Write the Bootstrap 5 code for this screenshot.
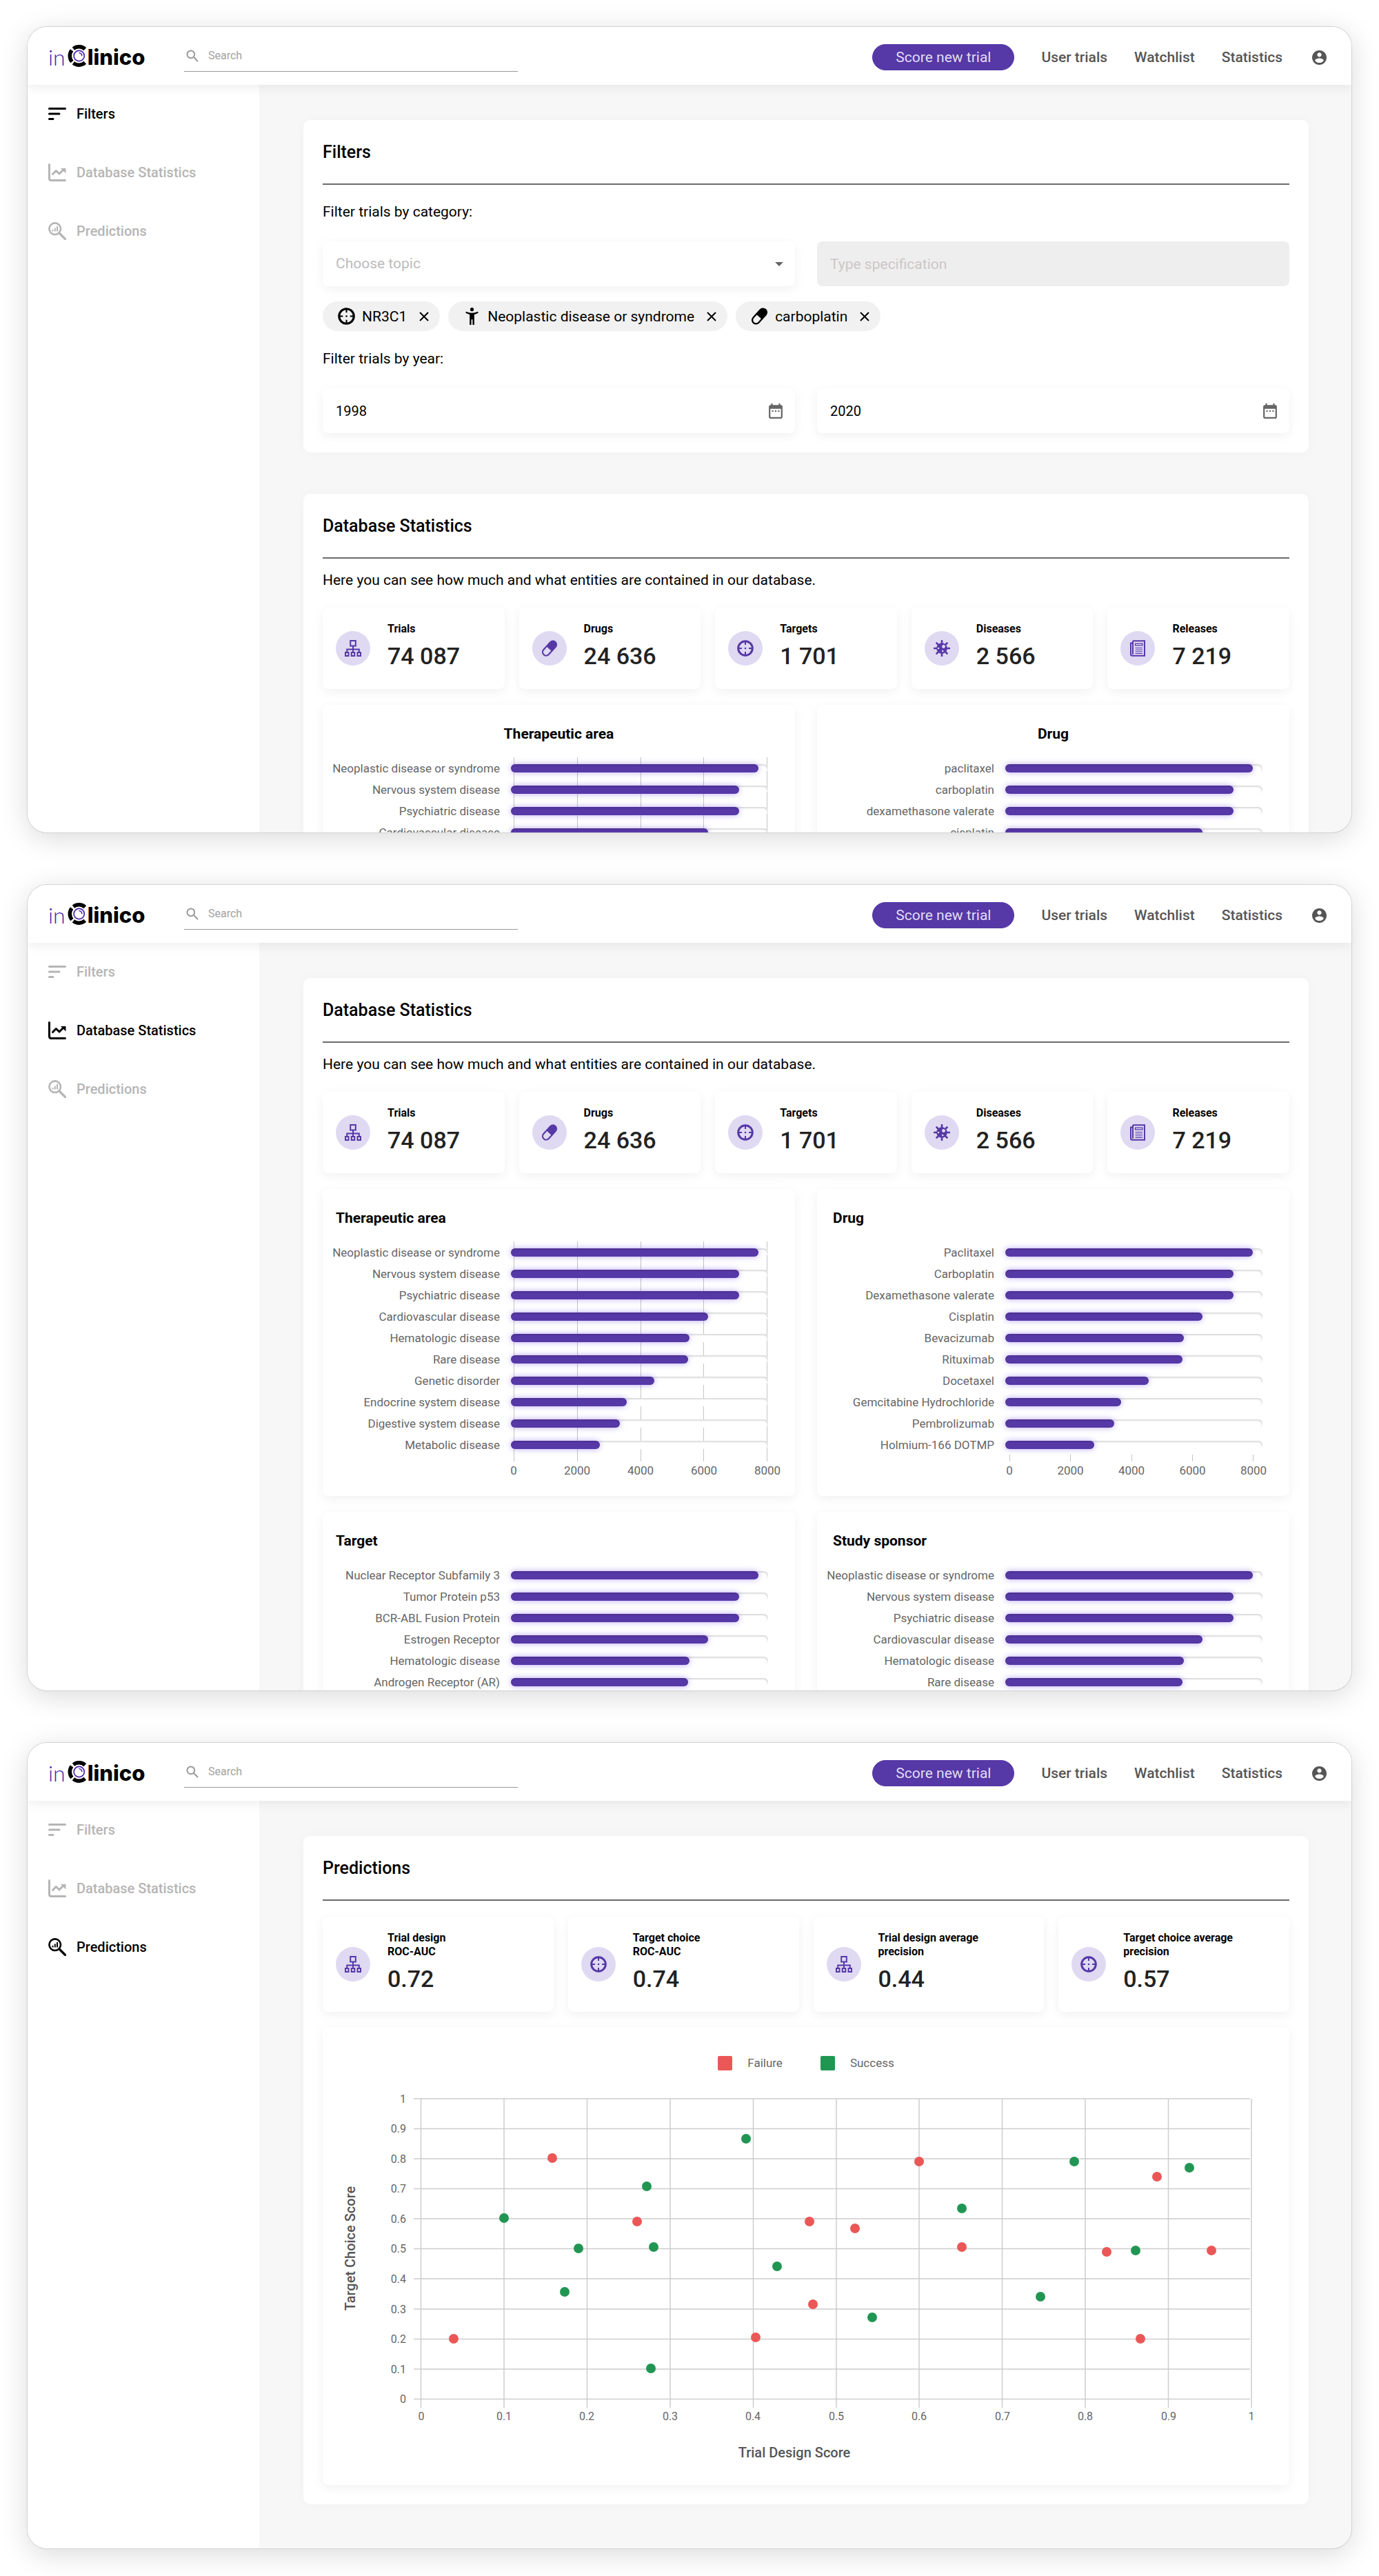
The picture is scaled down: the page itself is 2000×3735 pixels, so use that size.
<!DOCTYPE html>
<html lang="en">
<head>
<meta charset="utf-8">
<meta name="viewport" content="width=device-width, initial-scale=1">
<title>inClinico</title>
<link href="https://cdn.jsdelivr.net/npm/bootstrap@5.3.0/dist/css/bootstrap.min.css" rel="stylesheet">
<style>
  :root { --violet: #5638a6; --violet-soft: #dfd9f2; --ink: #000; --muted: #b5b5b5; --axis: #666; }
  body { font-family: Roboto, sans-serif; font-size: 21px; line-height: 24px; color: var(--ink); background: #fff; }
  a { text-decoration: none; color: inherit; }
  svg { display: block; flex: none; }

  /* application windows */
  .screens { padding: 39px 40px; gap: 76px; }
  .screen { aspect-ratio: 1920 / 1168; border-radius: 28px; background: #f7f7f7; overflow: hidden; box-shadow: 0 0 0 1px #d2d2d2, 0 8px 40px rgba(0,0,0,.15); }

  /* header */
  .topbar { height: 84px; padding: 0 36px 0 30px; background: #fff; box-shadow: 0 4px 16px rgba(0,0,0,.07); position: relative; z-index: 1; }
  .logo-link { width: 141px; margin-right: 56px; line-height: 34px; white-space: nowrap; }
  .logo-thin { font-family: Lato, sans-serif; font-weight: 300; font-size: 32px; color: #4a22b0; padding-top: 4px; margin-right: 3px; }
  .logo-bold { font-family: Inter, sans-serif; font-weight: 800; font-size: 31px; color: #000; padding-top: 4px; margin-left: -4px; }
  .searchbox { width: 484px; height: 46px; border-bottom: 1px solid #999; color: #999; padding-left: 3px; gap: 14px; }
  .searchbox input { border: 0; outline: 0; background: none; font-size: 16px; color: #999; min-width: 0; padding: 0; }
  .searchbox input::placeholder { color: #a3a3a3; opacity: 1; }
  .topnav { gap: 39px; color: #555; font-weight: 500; padding-top: 4px; }
  .btn-score { --bs-btn-bg: var(--violet); --bs-btn-color: #e3dcf5; --bs-btn-border-color: var(--violet); --bs-btn-hover-bg: #452d88; --bs-btn-hover-color: #fff; width: 206px; height: 38px; padding: 0; font-size: 21px; line-height: 24px; }

  /* sidebar */
  .side { width: 336px; flex: none; background: #fff; padding: 29px 30px; gap: 59px; font-size: 20px; }
  .side a { gap: 15px; color: var(--muted); font-weight: 500; }
  .side a.active { color: #000; }

  /* panels */
  .content { padding: 51px 62px 0 64px; gap: 60px; min-width: 0; }
  .panel { background: #fff; border-radius: 10px; padding: 32px 28px 28px; box-shadow: 0 0 16px rgba(0,0,0,.03); }
  .panel h2 { font-size: 25px; line-height: 30px; font-weight: 500; padding-bottom: 30px; margin: 0; border-bottom: 2px solid #6b6b6b; }
  .lift { background-color: #fff; border-radius: 8px; box-shadow: 0 4px 16px rgba(0,0,0,.06); }
  .two-up { display: grid; grid-template-columns: 1fr 1fr; column-gap: 32px; row-gap: 23px; }
  .intro { margin: 19px 0 28px; }

  /* filter form */
  .field { height: 65px; padding: 0 16px 0 19px; font-size: 21px; border: 0; border-radius: 8px; width: 100%; }
  .field-label { display: block; margin-bottom: 31px; }
  .panel h2 + .field-label { margin-top: 27px; }
  .topic { color: #bbb; background-position: right 17px center; background-size: 12px 6px; background-image: url("data:image/svg+xml,%3csvg xmlns='http://www.w3.org/2000/svg' viewBox='0 0 12 6'%3e%3cpath fill='%23666' d='M0 0h12L6 6z'/%3e%3c/svg%3e"); }
  .spec:disabled { background: #eee; }
  .spec::placeholder { color: #ccc7c7; opacity: 1; }
  .year { border: 0; outline: 0; background: none; min-width: 0; padding: 0; font-size: 20px; color: #000; }
  .chips { gap: 12px; margin: 22px 0 28px; }
  .chip { height: 43px; border-radius: 22px; background: #f1f1f1; padding: 0 16px 0 22px; }
  .chip button { border: 0; background: none; padding: 0; margin-left: 18px; color: inherit; }
  .chip-icon { margin-right: 10px; }

  /* figures */
  .stats { display: grid; gap: 21px; }
  .stats-5 { grid-template-columns: repeat(5, 1fr); }
  .stats-4 { grid-template-columns: repeat(4, 1fr); margin-top: 23px; }
  .stat { padding: 21px 19px; }
  .disc { width: 50px; height: 50px; background: var(--violet-soft); color: var(--violet); border-radius: 50%; flex: none; margin-right: 25px; --hole: var(--violet-soft); }
  .stat-name { font-size: 16px; line-height: 20px; font-weight: 700; }
  .stat-value { font-size: 34px; line-height: 40px; font-weight: 500; color: #222; padding: 9px 0 7px; }

  /* bar charts */
  .charts { margin-top: 23px; }
  .chart { padding: 30px 0 25px; }
  .chart h3 { font-size: 21px; line-height: 24px; font-weight: 700; margin: 0 0 22px; padding: 0 19px; }
  .chart.inset h3 { padding: 0 23px; }
  .plot { position: relative; padding: 0 39px 9px 0; }
  .bar-row { height: 31px; gap: 16px; font-size: 17px; color: var(--axis); position: relative; }
  .bar-row > span { width: 257px; text-align: right; white-space: nowrap; flex: none; }
  .track { height: 12px; border-radius: 6px; background: #fff; box-shadow: inset -1px 2px 2px rgba(0,0,0,.14); }
  .fill { height: 12px; border-radius: 6px; background: var(--violet); box-shadow: 0 0 8px rgba(98,60,234,.45), inset 0 2px 2px rgba(0,0,0,.12); }
  .rules { position: absolute; top: 0; bottom: 0; left: 277px; right: 40px; }
  .rules i { width: 1px; background: #c4c4c4; }
  .rules.ticks { top: auto; height: 10px; left: 279px; right: 52px; }
  .scale { margin: 1px 40px 0 277px; font-size: 17px; color: var(--axis); }
  .scale.ticks-scale { margin: 1px 52px 0 279px; }
  .scale span { width: 0; display: flex; justify-content: center; }

  /* scatter chart */
  .scatter { padding: 40px 0 0; margin-top: 22px; }
  .legend { gap: 55px; font-size: 17px; color: var(--axis); }
  .legend span { display: flex; align-items: center; gap: 22px; }
  .swatch { width: 21px; height: 21px; border-radius: 2px; }
  .fail { background: #eb5757; fill: #eb5757; }
  .good { background: #219653; fill: #219653; }
  .axis-title { font-size: 20px; font-weight: 500; fill: #555; text-anchor: middle; }
  .scatter-num { font-size: 16px; fill: var(--axis); }
</style>
</head>
<body>

<svg width="0" height="0" class="position-absolute" aria-hidden="true">
  <symbol id="mark" viewBox="0 0 33 34">
    <path d="M8.4 6.600A13.200 13.200 0 0 1 25.300 7.200M6.400 25.500A13.200 13.200 0 0 1 6.100 8.900M25.300 26.800A13.200 13.200 0 0 1 8.400 27.400" fill="none" stroke="#000" stroke-width="5.500"/>
    <circle cx="16.700" cy="17" r="7.600" fill="none" stroke="#4a22b0" stroke-width="1.700"/>
    <path d="M17 12.700a4.300 4.300 0 0 1 3.800 4" fill="none" stroke="#4a22b0" stroke-width="1.500" stroke-linecap="round"/>
  </symbol>
  <symbol id="search" viewBox="0 0 18 18"><g fill="none" stroke="currentColor" stroke-width="2"><circle cx="6.800" cy="6.800" r="5.400"/><path d="M10.800 10.800 17 17"/></g></symbol>
  <symbol id="sort" viewBox="0 0 26 26"><path d="M1.500 5.500h23M1.500 13h14.500M1.500 20.500h5.500" fill="none" stroke="currentColor" stroke-width="3" stroke-linecap="round"/></symbol>
  <symbol id="trend" viewBox="0 0 26 26"><g fill="none" stroke="currentColor" stroke-width="3" stroke-linecap="round"><path d="M1.500 1.500v20q0 3 3 3h20"/><path d="M6.500 15.500 11.300 10.500l4.700 4.500 6-6" stroke-linejoin="round"/></g><path d="M18 7h7.500v7.500z" fill="currentColor"/></symbol>
  <symbol id="insight" viewBox="0 0 26 26"><g fill="none" stroke="currentColor"><circle cx="9.700" cy="9.700" r="8.300" stroke-width="2.600"/><path d="m16.500 16.500 8 8" stroke-width="3.200" stroke-linecap="round"/><path d="M6.500 13.500v-2.500M9.800 13.500v-5M13 13.500v-7.500" stroke-width="2"/></g></symbol>
  <symbol id="account" viewBox="2 2 20 20"><path fill="currentColor" d="M12 2C6.480 2 2 6.480 2 12s4.480 10 10 10 10-4.480 10-10S17.520 2 12 2zm0 3c1.660 0 3 1.340 3 3s-1.340 3-3 3-3-1.340-3-3 1.340-3 3-3zm0 14.200c-2.500 0-4.710-1.280-6-3.220.03-1.990 4-3.080 6-3.080 1.990 0 5.970 1.090 6 3.080-1.290 1.940-3.500 3.220-6 3.220z"/></symbol>
  <symbol id="target" viewBox="0 0 24 24"><circle cx="12" cy="12" r="10.300" fill="none" stroke="currentColor" stroke-width="3"/><path d="M12 2v5M12 17v5M2 12h5M17 12h5" stroke="currentColor" stroke-width="2"/><circle cx="12" cy="12" r="1.300" fill="currentColor"/></symbol>
  <symbol id="figure" viewBox="0 0 24 24"><circle cx="12" cy="2.600" r="2.500" fill="currentColor"/><path d="M3.800 5.500q3.700 2 8.200 2t8.200-2l.6 2q-2.600 1.400-5.600 2V24h-2.300v-7.500h-1.800V24H8.800V9.500q-3-.6-5.600-2z" fill="currentColor"/></symbol>
  <symbol id="pill" viewBox="0 0 24 24"><g transform="rotate(42 12 12)"><rect x="5.800" y="-1.500" width="12.400" height="27" rx="6.200" fill="currentColor"/><path d="M8 13h8v6.300a4 4 0 0 1-8 0z" fill="var(--hole,#f1f1f1)"/></g></symbol>
  <symbol id="tree" viewBox="0 0 24 24"><g fill="none" stroke="currentColor" stroke-width="2"><path d="M8.200 1h7.600v7.500H8.200zM1 18h4.500v5H1zM9.750 18h4.500v5h-4.500zM18.500 18H23v5h-4.500zM12 8.500V18M3.250 18v-4.500h17.500V18"/></g></symbol>
  <symbol id="virus" viewBox="0 0 24 24"><path d="M12 1v22M1 12h22M4.500 4.500l15 15M19.500 4.500l-15 15" stroke="currentColor" stroke-width="2.600" stroke-linecap="round"/><circle cx="12" cy="12" r="7.800" fill="currentColor"/><circle cx="14.500" cy="9.500" r="2.400" fill="var(--hole)"/><circle cx="7" cy="12" r="1.300" fill="var(--hole)"/><circle cx="13.200" cy="16" r="1.300" fill="var(--hole)"/></symbol>
  <symbol id="news" viewBox="0 0 24 24"><g fill="none" stroke="currentColor"><path d="M5 1.200h17v21.600H4a2 2 0 0 1-2-2V4.500h3M5 1.200v19.500" stroke-width="2"/><path d="M8.500 5.200H19v2.600H8.500z" stroke-width="1.200"/><path d="M8.500 11.500H19M8.500 14.200H19M8.500 16.900H19M8.500 19.500H19" stroke-width="1"/></g></symbol>
  <symbol id="calendar" viewBox="2 2 20 20"><path fill="currentColor" d="M9 11H7v2h2v-2zm4 0h-2v2h2v-2zm4 0h-2v2h2v-2zm2-7h-1V2h-2v2H8V2H6v2H5c-1.110 0-1.990.9-1.990 2L3 20c0 1.100.890 2 2 2h14c1.100 0 2-.9 2-2V6c0-1.100-.9-2-2-2zm0 16H5V9h14v11z"/></symbol>
  <symbol id="close" viewBox="0 0 14 14"><path d="m1 1 12 12M13 1 1 13" stroke="currentColor" stroke-width="2"/></symbol>
</svg>

<main class="screens d-flex flex-column">

  <section class="screen d-flex flex-column" aria-label="Filters screen">
    <header class="topbar d-flex align-items-center flex-shrink-0">
      <a class="logo-link d-flex align-items-center" href="#"><span class="logo-thin">in</span><svg width="33" height="34" role="img" aria-label="C"><use href="#mark"/></svg><span class="logo-bold">linico</span></a>
      <label class="searchbox d-flex align-items-center"><svg width="18" height="18"><use href="#search"/></svg><input class="flex-grow-1" type="search" placeholder="Search" aria-label="Search"></label>
      <nav class="topnav d-flex align-items-center ms-auto">
        <button class="btn btn-score rounded-pill" type="button">Score new trial</button>
        <a href="#">User trials</a><a href="#">Watchlist</a><a href="#">Statistics</a>
        <a class="ps-1" href="#" aria-label="Account"><svg width="21" height="21"><use href="#account"/></svg></a>
      </nav>
    </header>
    <div class="d-flex flex-grow-1 overflow-hidden">
      <aside class="side d-flex flex-column">
        <a class="active d-flex align-items-center" href="#"><svg width="26" height="26"><use href="#sort"/></svg>Filters</a>
        <a class="d-flex align-items-center" href="#"><svg width="26" height="26"><use href="#trend"/></svg>Database Statistics</a>
        <a class="d-flex align-items-center" href="#"><svg width="26" height="26"><use href="#insight"/></svg>Predictions</a>
      </aside>
      <div class="content flex-grow-1 d-flex flex-column">
        <form class="panel">
          <h2>Filters</h2>
          <label class="field-label" for="topic">Filter trials by category:</label>
          <div class="two-up">
            <select class="form-select field lift topic" id="topic"><option>Choose topic</option></select>
            <input class="form-control field spec" type="text" placeholder="Type specification" aria-label="Type specification" disabled>
          </div>
          <div class="chips d-flex">
            <span class="chip d-flex align-items-center"><svg class="chip-icon" width="25" height="25"><use href="#target"/></svg>NR3C1<button type="button" aria-label="Remove NR3C1"><svg width="14" height="14"><use href="#close"/></svg></button></span>
            <span class="chip d-flex align-items-center"><svg class="chip-icon" width="25" height="25"><use href="#figure"/></svg>Neoplastic disease or syndrome<button type="button" aria-label="Remove disease"><svg width="14" height="14"><use href="#close"/></svg></button></span>
            <span class="chip d-flex align-items-center"><svg class="chip-icon" width="25" height="25"><use href="#pill"/></svg>carboplatin<button type="button" aria-label="Remove carboplatin"><svg width="14" height="14"><use href="#close"/></svg></button></span>
          </div>
          <label class="field-label" for="from">Filter trials by year:</label>
          <div class="two-up">
            <div class="field lift d-flex align-items-center"><input class="year flex-grow-1" id="from" type="text" value="1998"><svg width="24" height="22" color="#666"><use href="#calendar"/></svg></div>
            <div class="field lift d-flex align-items-center"><input class="year flex-grow-1" type="text" value="2020" aria-label="To year"><svg width="24" height="22" color="#666"><use href="#calendar"/></svg></div>
          </div>
        </form>
        <section class="panel">
          <h2>Database Statistics</h2>
          <p class="intro">Here you can see how much and what entities are contained in our database.</p>
          <div class="stats stats-5">
            <div class="stat lift d-flex align-items-center"><span class="disc d-flex align-items-center justify-content-center"><svg width="24" height="24"><use href="#tree"/></svg></span><div><div class="stat-name">Trials</div><div class="stat-value">74 087</div></div></div>
            <div class="stat lift d-flex align-items-center"><span class="disc d-flex align-items-center justify-content-center"><svg width="24" height="24"><use href="#pill"/></svg></span><div><div class="stat-name">Drugs</div><div class="stat-value">24 636</div></div></div>
            <div class="stat lift d-flex align-items-center"><span class="disc d-flex align-items-center justify-content-center"><svg width="24" height="24"><use href="#target"/></svg></span><div><div class="stat-name">Targets</div><div class="stat-value">1 701</div></div></div>
            <div class="stat lift d-flex align-items-center"><span class="disc d-flex align-items-center justify-content-center"><svg width="24" height="24"><use href="#virus"/></svg></span><div><div class="stat-name">Diseases</div><div class="stat-value">2 566</div></div></div>
            <div class="stat lift d-flex align-items-center"><span class="disc d-flex align-items-center justify-content-center"><svg width="24" height="24"><use href="#news"/></svg></span><div><div class="stat-name">Releases</div><div class="stat-value">7 219</div></div></div>
          </div>
          <div class="two-up charts">
            <div class="chart lift">
              <h3 class="text-center">Therapeutic area</h3>
              <div class="plot">
                <div class="rules d-flex justify-content-between"><i></i><i></i><i></i><i></i><i></i></div>
                <div class="bar-row d-flex align-items-center"><span>Neoplastic disease or syndrome</span><div class="track flex-grow-1"><div class="fill" style="width:96.3%"></div></div></div>
                <div class="bar-row d-flex align-items-center"><span>Nervous system disease</span><div class="track flex-grow-1"><div class="fill" style="width:88.8%"></div></div></div>
                <div class="bar-row d-flex align-items-center"><span>Psychiatric disease</span><div class="track flex-grow-1"><div class="fill" style="width:88.8%"></div></div></div>
                <div class="bar-row d-flex align-items-center"><span>Cardiovascular disease</span><div class="track flex-grow-1"><div class="fill" style="width:76.8%"></div></div></div>
              </div>
            </div>
            <div class="chart lift">
              <h3 class="text-center">Drug</h3>
              <div class="plot">
                <div class="bar-row d-flex align-items-center"><span>paclitaxel</span><div class="track flex-grow-1"><div class="fill" style="width:96.3%"></div></div></div>
                <div class="bar-row d-flex align-items-center"><span>carboplatin</span><div class="track flex-grow-1"><div class="fill" style="width:88.8%"></div></div></div>
                <div class="bar-row d-flex align-items-center"><span>dexamethasone valerate</span><div class="track flex-grow-1"><div class="fill" style="width:88.8%"></div></div></div>
                <div class="bar-row d-flex align-items-center"><span>cisplatin</span><div class="track flex-grow-1"><div class="fill" style="width:76.8%"></div></div></div>
              </div>
            </div>
          </div>
        </section>
      </div>
    </div>
  </section>

  <section class="screen d-flex flex-column" aria-label="Database statistics screen">
    <header class="topbar d-flex align-items-center flex-shrink-0">
      <a class="logo-link d-flex align-items-center" href="#"><span class="logo-thin">in</span><svg width="33" height="34" role="img" aria-label="C"><use href="#mark"/></svg><span class="logo-bold">linico</span></a>
      <label class="searchbox d-flex align-items-center"><svg width="18" height="18"><use href="#search"/></svg><input class="flex-grow-1" type="search" placeholder="Search" aria-label="Search"></label>
      <nav class="topnav d-flex align-items-center ms-auto">
        <button class="btn btn-score rounded-pill" type="button">Score new trial</button>
        <a href="#">User trials</a><a href="#">Watchlist</a><a href="#">Statistics</a>
        <a class="ps-1" href="#" aria-label="Account"><svg width="21" height="21"><use href="#account"/></svg></a>
      </nav>
    </header>
    <div class="d-flex flex-grow-1 overflow-hidden">
      <aside class="side d-flex flex-column">
        <a class="d-flex align-items-center" href="#"><svg width="26" height="26"><use href="#sort"/></svg>Filters</a>
        <a class="active d-flex align-items-center" href="#"><svg width="26" height="26"><use href="#trend"/></svg>Database Statistics</a>
        <a class="d-flex align-items-center" href="#"><svg width="26" height="26"><use href="#insight"/></svg>Predictions</a>
      </aside>
      <div class="content flex-grow-1 d-flex flex-column">
        <section class="panel">
          <h2>Database Statistics</h2>
          <p class="intro">Here you can see how much and what entities are contained in our database.</p>
          <div class="stats stats-5">
            <div class="stat lift d-flex align-items-center"><span class="disc d-flex align-items-center justify-content-center"><svg width="24" height="24"><use href="#tree"/></svg></span><div><div class="stat-name">Trials</div><div class="stat-value">74 087</div></div></div>
            <div class="stat lift d-flex align-items-center"><span class="disc d-flex align-items-center justify-content-center"><svg width="24" height="24"><use href="#pill"/></svg></span><div><div class="stat-name">Drugs</div><div class="stat-value">24 636</div></div></div>
            <div class="stat lift d-flex align-items-center"><span class="disc d-flex align-items-center justify-content-center"><svg width="24" height="24"><use href="#target"/></svg></span><div><div class="stat-name">Targets</div><div class="stat-value">1 701</div></div></div>
            <div class="stat lift d-flex align-items-center"><span class="disc d-flex align-items-center justify-content-center"><svg width="24" height="24"><use href="#virus"/></svg></span><div><div class="stat-name">Diseases</div><div class="stat-value">2 566</div></div></div>
            <div class="stat lift d-flex align-items-center"><span class="disc d-flex align-items-center justify-content-center"><svg width="24" height="24"><use href="#news"/></svg></span><div><div class="stat-name">Releases</div><div class="stat-value">7 219</div></div></div>
          </div>
          <div class="two-up charts">
            <div class="chart lift">
              <h3>Therapeutic area</h3>
              <div class="plot">
                <div class="rules d-flex justify-content-between"><i></i><i></i><i></i><i></i><i></i></div>
                <div class="bar-row d-flex align-items-center"><span>Neoplastic disease or syndrome</span><div class="track flex-grow-1"><div class="fill" style="width:96.3%"></div></div></div>
                <div class="bar-row d-flex align-items-center"><span>Nervous system disease</span><div class="track flex-grow-1"><div class="fill" style="width:88.8%"></div></div></div>
                <div class="bar-row d-flex align-items-center"><span>Psychiatric disease</span><div class="track flex-grow-1"><div class="fill" style="width:88.8%"></div></div></div>
                <div class="bar-row d-flex align-items-center"><span>Cardiovascular disease</span><div class="track flex-grow-1"><div class="fill" style="width:76.8%"></div></div></div>
                <div class="bar-row d-flex align-items-center"><span>Hematologic disease</span><div class="track flex-grow-1"><div class="fill" style="width:69.5%"></div></div></div>
                <div class="bar-row d-flex align-items-center"><span>Rare disease</span><div class="track flex-grow-1"><div class="fill" style="width:69%"></div></div></div>
                <div class="bar-row d-flex align-items-center"><span>Genetic disorder</span><div class="track flex-grow-1"><div class="fill" style="width:55.8%"></div></div></div>
                <div class="bar-row d-flex align-items-center"><span>Endocrine system disease</span><div class="track flex-grow-1"><div class="fill" style="width:45.1%"></div></div></div>
                <div class="bar-row d-flex align-items-center"><span>Digestive system disease</span><div class="track flex-grow-1"><div class="fill" style="width:42.4%"></div></div></div>
                <div class="bar-row d-flex align-items-center"><span>Metabolic disease</span><div class="track flex-grow-1"><div class="fill" style="width:34.6%"></div></div></div>
              </div>
              <div class="scale d-flex justify-content-between"><span>0</span><span>2000</span><span>4000</span><span>6000</span><span>8000</span></div>
            </div>
            <div class="chart inset lift">
              <h3>Drug</h3>
              <div class="plot">
                <div class="rules ticks d-flex justify-content-between"><i></i><i></i><i></i><i></i><i></i></div>
                <div class="bar-row d-flex align-items-center"><span>Paclitaxel</span><div class="track flex-grow-1"><div class="fill" style="width:96.3%"></div></div></div>
                <div class="bar-row d-flex align-items-center"><span>Carboplatin</span><div class="track flex-grow-1"><div class="fill" style="width:88.8%"></div></div></div>
                <div class="bar-row d-flex align-items-center"><span>Dexamethasone valerate</span><div class="track flex-grow-1"><div class="fill" style="width:88.8%"></div></div></div>
                <div class="bar-row d-flex align-items-center"><span>Cisplatin</span><div class="track flex-grow-1"><div class="fill" style="width:76.8%"></div></div></div>
                <div class="bar-row d-flex align-items-center"><span>Bevacizumab</span><div class="track flex-grow-1"><div class="fill" style="width:69.5%"></div></div></div>
                <div class="bar-row d-flex align-items-center"><span>Rituximab</span><div class="track flex-grow-1"><div class="fill" style="width:69%"></div></div></div>
                <div class="bar-row d-flex align-items-center"><span>Docetaxel</span><div class="track flex-grow-1"><div class="fill" style="width:55.8%"></div></div></div>
                <div class="bar-row d-flex align-items-center"><span>Gemcitabine Hydrochloride</span><div class="track flex-grow-1"><div class="fill" style="width:45.1%"></div></div></div>
                <div class="bar-row d-flex align-items-center"><span>Pembrolizumab</span><div class="track flex-grow-1"><div class="fill" style="width:42.4%"></div></div></div>
                <div class="bar-row d-flex align-items-center"><span>Holmium-166 DOTMP</span><div class="track flex-grow-1"><div class="fill" style="width:34.6%"></div></div></div>
              </div>
              <div class="scale ticks-scale d-flex justify-content-between"><span>0</span><span>2000</span><span>4000</span><span>6000</span><span>8000</span></div>
            </div>
            <div class="chart lift">
              <h3>Target</h3>
              <div class="plot">
                <div class="bar-row d-flex align-items-center"><span>Nuclear Receptor Subfamily 3</span><div class="track flex-grow-1"><div class="fill" style="width:96.3%"></div></div></div>
                <div class="bar-row d-flex align-items-center"><span>Tumor Protein p53</span><div class="track flex-grow-1"><div class="fill" style="width:88.8%"></div></div></div>
                <div class="bar-row d-flex align-items-center"><span>BCR-ABL Fusion Protein</span><div class="track flex-grow-1"><div class="fill" style="width:88.8%"></div></div></div>
                <div class="bar-row d-flex align-items-center"><span>Estrogen Receptor</span><div class="track flex-grow-1"><div class="fill" style="width:76.8%"></div></div></div>
                <div class="bar-row d-flex align-items-center"><span>Hematologic disease</span><div class="track flex-grow-1"><div class="fill" style="width:69.5%"></div></div></div>
                <div class="bar-row d-flex align-items-center"><span>Androgen Receptor (AR)</span><div class="track flex-grow-1"><div class="fill" style="width:69%"></div></div></div>
              </div>
            </div>
            <div class="chart inset lift">
              <h3>Study sponsor</h3>
              <div class="plot">
                <div class="bar-row d-flex align-items-center"><span>Neoplastic disease or syndrome</span><div class="track flex-grow-1"><div class="fill" style="width:96.3%"></div></div></div>
                <div class="bar-row d-flex align-items-center"><span>Nervous system disease</span><div class="track flex-grow-1"><div class="fill" style="width:88.8%"></div></div></div>
                <div class="bar-row d-flex align-items-center"><span>Psychiatric disease</span><div class="track flex-grow-1"><div class="fill" style="width:88.8%"></div></div></div>
                <div class="bar-row d-flex align-items-center"><span>Cardiovascular disease</span><div class="track flex-grow-1"><div class="fill" style="width:76.8%"></div></div></div>
                <div class="bar-row d-flex align-items-center"><span>Hematologic disease</span><div class="track flex-grow-1"><div class="fill" style="width:69.5%"></div></div></div>
                <div class="bar-row d-flex align-items-center"><span>Rare disease</span><div class="track flex-grow-1"><div class="fill" style="width:69%"></div></div></div>
              </div>
            </div>
          </div>
        </section>
      </div>
    </div>
  </section>

  <section class="screen d-flex flex-column" aria-label="Predictions screen">
    <header class="topbar d-flex align-items-center flex-shrink-0">
      <a class="logo-link d-flex align-items-center" href="#"><span class="logo-thin">in</span><svg width="33" height="34" role="img" aria-label="C"><use href="#mark"/></svg><span class="logo-bold">linico</span></a>
      <label class="searchbox d-flex align-items-center"><svg width="18" height="18"><use href="#search"/></svg><input class="flex-grow-1" type="search" placeholder="Search" aria-label="Search"></label>
      <nav class="topnav d-flex align-items-center ms-auto">
        <button class="btn btn-score rounded-pill" type="button">Score new trial</button>
        <a href="#">User trials</a><a href="#">Watchlist</a><a href="#">Statistics</a>
        <a class="ps-1" href="#" aria-label="Account"><svg width="21" height="21"><use href="#account"/></svg></a>
      </nav>
    </header>
    <div class="d-flex flex-grow-1 overflow-hidden">
      <aside class="side d-flex flex-column">
        <a class="d-flex align-items-center" href="#"><svg width="26" height="26"><use href="#sort"/></svg>Filters</a>
        <a class="d-flex align-items-center" href="#"><svg width="26" height="26"><use href="#trend"/></svg>Database Statistics</a>
        <a class="active d-flex align-items-center" href="#"><svg width="26" height="26"><use href="#insight"/></svg>Predictions</a>
      </aside>
      <div class="content flex-grow-1 d-flex flex-column">
        <section class="panel">
          <h2>Predictions</h2>
          <div class="stats stats-4">
            <div class="stat lift d-flex align-items-center"><span class="disc d-flex align-items-center justify-content-center"><svg width="24" height="24"><use href="#tree"/></svg></span><div><div class="stat-name">Trial design<br>ROC-AUC</div><div class="stat-value">0.72</div></div></div>
            <div class="stat lift d-flex align-items-center"><span class="disc d-flex align-items-center justify-content-center"><svg width="24" height="24"><use href="#target"/></svg></span><div><div class="stat-name">Target choice<br>ROC-AUC</div><div class="stat-value">0.74</div></div></div>
            <div class="stat lift d-flex align-items-center"><span class="disc d-flex align-items-center justify-content-center"><svg width="24" height="24"><use href="#tree"/></svg></span><div><div class="stat-name">Trial design average<br>precision</div><div class="stat-value">0.44</div></div></div>
            <div class="stat lift d-flex align-items-center"><span class="disc d-flex align-items-center justify-content-center"><svg width="24" height="24"><use href="#target"/></svg></span><div><div class="stat-name">Target choice average<br>precision</div><div class="stat-value">0.57</div></div></div>
          </div>
          <div class="scatter lift">
            <div class="legend d-flex justify-content-center"><span><i class="swatch fail"></i>Failure</span><span><i class="swatch good"></i>Success</span></div>
            <svg class="w-100" viewBox="0 64 1402 600" role="img" aria-label="Target choice score against trial design score">
              <g stroke="#cdcdcd" stroke-width="1.500">
                <path d="M132 104H1345M132 147.500H1345M132 191H1345M132 234.500H1345M132 278H1345M132 321.500H1345M132 365H1345M132 409H1345M132 452.500H1345M132 496H1345M132 539.500H1345"/>
                <path d="M142.500 104V552M263 104V552M383.500 104V552M504 104V552M624.500 104V552M745 104V552M865 104V552M985.500 104V552M1106 104V552M1226.500 104V552M1347 104V552"/>
              </g>
              <g class="scatter-num" text-anchor="end">
                <text x="121" y="110">1</text><text x="121" y="153">0.9</text><text x="121" y="197">0.8</text><text x="121" y="240">0.7</text><text x="121" y="284">0.6</text><text x="121" y="327">0.5</text><text x="121" y="371">0.4</text><text x="121" y="415">0.3</text><text x="121" y="458">0.2</text><text x="121" y="502">0.1</text><text x="121" y="545">0</text>
              </g>
              <g class="scatter-num" text-anchor="middle">
                <text x="143" y="570">0</text><text x="263" y="570">0.1</text><text x="383" y="570">0.2</text><text x="504" y="570">0.3</text><text x="624" y="570">0.4</text><text x="745" y="570">0.5</text><text x="865" y="570">0.6</text><text x="986" y="570">0.7</text><text x="1106" y="570">0.8</text><text x="1227" y="570">0.9</text><text x="1347" y="570">1</text>
              </g>
              <text class="axis-title" x="684" y="624">Trial Design Score</text>
              <text class="axis-title" transform="translate(47 321) rotate(-90)">Target Choice Score</text>
              <g class="good">
                <circle cx="263" cy="277" r="7"/><circle cx="371" cy="321" r="7"/><circle cx="351" cy="384" r="7"/><circle cx="480" cy="319" r="7"/><circle cx="476" cy="495" r="7"/><circle cx="659" cy="347" r="7"/><circle cx="797" cy="421" r="7"/><circle cx="927" cy="263" r="7"/><circle cx="1041" cy="391" r="7"/><circle cx="1179" cy="324" r="7"/><circle cx="614" cy="162" r="7"/><circle cx="470" cy="231" r="7"/><circle cx="1090" cy="195" r="7"/><circle cx="1257" cy="204" r="7"/>
              </g>
              <g class="fail">
                <circle cx="333" cy="190" r="7"/><circle cx="865" cy="195" r="7"/><circle cx="1210" cy="217" r="7"/><circle cx="456" cy="282" r="7"/><circle cx="706" cy="282" r="7"/><circle cx="772" cy="292" r="7"/><circle cx="927" cy="319" r="7"/><circle cx="1137" cy="326" r="7"/><circle cx="1289" cy="324" r="7"/><circle cx="711" cy="402" r="7"/><circle cx="190" cy="452" r="7"/><circle cx="628" cy="450" r="7"/><circle cx="1186" cy="452" r="7"/>
              </g>
            </svg>
          </div>
        </section>
      </div>
    </div>
  </section>
</main>

<script src="https://cdn.jsdelivr.net/npm/bootstrap@5.3.0/dist/js/bootstrap.bundle.min.js"></script>
</body>
</html>
